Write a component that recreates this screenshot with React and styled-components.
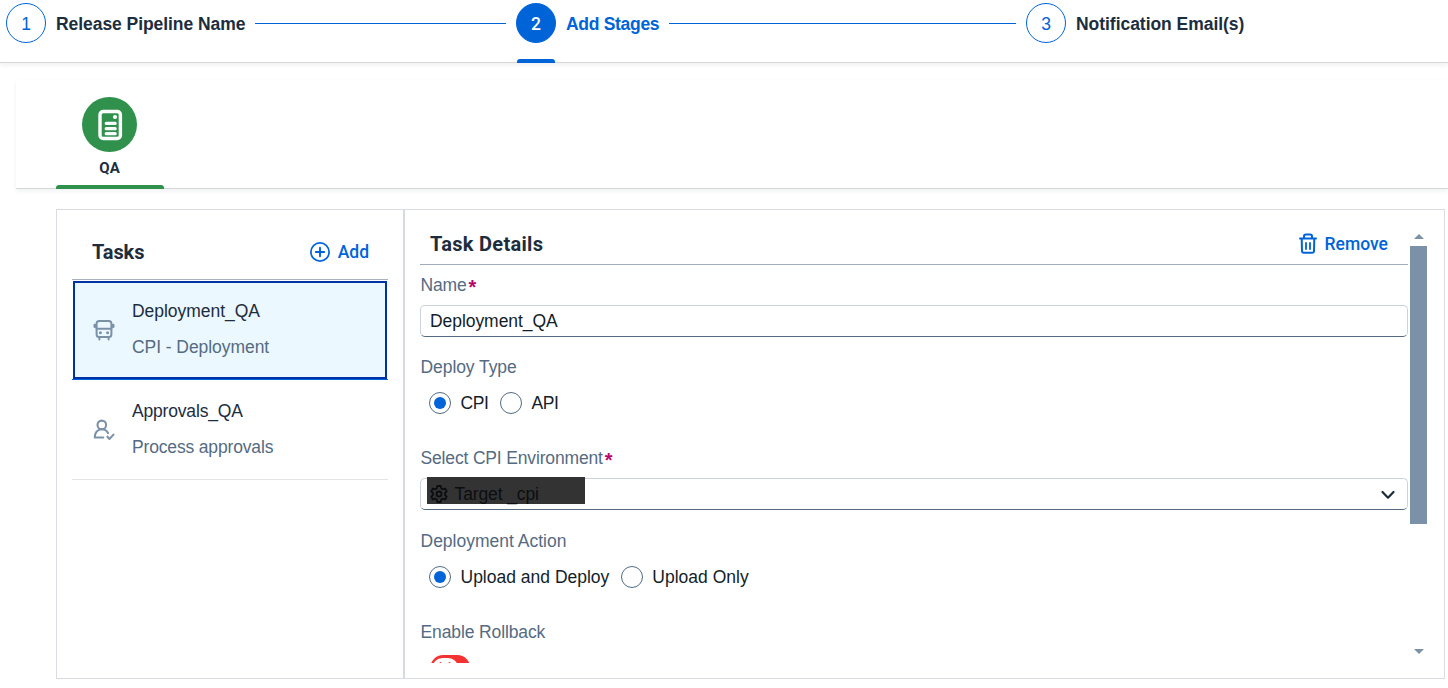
import React from 'react';
import styled, { createGlobalStyle } from 'styled-components';

const blue = '#0064d9';
const ink = '#1d2d3e';
const muted = '#556b82';
const slate = '#7b91a8';

const GlobalStyle = createGlobalStyle`
  * { box-sizing: border-box; }
  body {
    margin: 0;
    background: #fff;
    color: ${ink};
    font: 17.5px/24px "Liberation Sans", Arial, sans-serif;
    overflow: hidden;
  }
`;

const Page = styled.div`
  height: 688px;
  display: flex;
  flex-direction: column;
`;

const Text = styled.span`
  white-space: nowrap;
  letter-spacing: ${(p) => p.$ls || 0}px;
`;

const StrongText = styled(Text)`
  font-family: Roboto, "Liberation Sans", sans-serif;
  font-weight: 700;
`;

/* Wizard steps */
const Steps = styled.header`
  flex: none;
  height: 63px;
  padding-left: 6px;
  display: flex;
  border-bottom: 1px solid #d5d7d9;
  box-shadow: 0 2px 4px rgba(34, 53, 72, 0.08);
`;

const Step = styled.div`
  flex: none;
  width: ${(p) => (p.$last ? 'auto' : '510px')};
  padding: 3px 10px 0 0;
  color: ${(p) => (p.$active ? blue : ink)};
`;

const StepRow = styled.div`
  height: 40px;
  display: flex;
  align-items: center;
  gap: 10px;
`;

const StepCircle = styled.span`
  flex: none;
  width: 40px;
  height: 40px;
  border: 1px solid ${blue};
  border-radius: 50%;
  background: ${(p) => (p.$active ? blue : '#fff')};
  color: ${(p) => (p.$active ? '#fff' : blue)};
  font-size: 17.5px;
  font-family: ${(p) => (p.$active ? 'Roboto' : '"Liberation Sans"')}, sans-serif;
  font-weight: ${(p) => (p.$active ? 500 : 400)};
  line-height: 40px;
  text-align: center;
`;

const StepLabel = styled(Text)`
  padding-top: 1px;
  font-weight: 700;
`;

const StepLine = styled.span`
  flex: 1;
  height: 1px;
  margin-top: 1px;
  background: ${blue};
`;

const StepMarker = styled.div`
  width: 38px;
  height: 4px;
  margin: 16px 0 0 1px;
  border-radius: 3px 3px 0 0;
  background: ${blue};
`;

/* Stage tabs */
const StageTabs = styled.nav`
  flex: none;
  height: 109px;
  margin: 17px 0 0 16px;
  padding: 17px 0 0 40px;
  border-bottom: 1px solid #d5d7d9;
  box-shadow: 0 2px 4px rgba(34, 53, 72, 0.07);
`;

const StageTab = styled.div`
  width: 108px;
  height: 92px;
  display: flex;
  flex-direction: column;
  align-items: center;
  font-size: 15px;
`;

const StageBadge = styled.div`
  width: 55px;
  height: 55px;
  margin-right: 1px;
  display: grid;
  place-items: center;
  border-radius: 50%;
  background: #30914c;
`;

const StageName = styled(StrongText)`
  margin: 4px 1px 0 0;
`;

const StageBar = styled.div`
  width: 100%;
  height: 4px;
  margin-top: auto;
  border-radius: 3px 3px 0 0;
  background: #30914c;
`;

/* Split panel */
const Panel = styled.main`
  flex: none;
  height: 470px;
  margin: 20px 3px 0 56px;
  display: flex;
  border: 1px solid #d9dce1;
`;

const TaskColumn = styled.section`
  width: 348px;
  padding: 0 15px;
  border-right: 2px solid #d6dae0;
`;

const TaskHeader = styled.div`
  height: 70px;
  padding: 15px 19px 0 20px;
  display: flex;
  align-items: center;
  justify-content: space-between;
  border-bottom: 1px solid #a8b3bd;
`;

const Title = styled(StrongText).attrs({ as: 'h2' })`
  margin: 0;
  font-size: 20px;
`;

const LinkButton = styled.button`
  display: flex;
  align-items: center;
  gap: ${(p) => p.$gap}px;
  padding: 0;
  border: 0;
  background: none;
  color: ${blue};
  font: 500 17.5px/24px Roboto, "Liberation Sans", sans-serif;
`;

const TaskItem = styled.div`
  height: 100px;
  padding: ${(p) => (p.$selected ? '1px 1px 0' : '0 1px')};
  border-bottom: 1px solid ${(p) => (p.$selected ? blue : '#e3e5e6')};
`;

const TaskBody = styled.div`
  height: 100%;
  padding-left: 18px;
  display: flex;
  align-items: center;
  border: 2px solid ${(p) => (p.$selected ? '#0032a5' : 'transparent')};
  background: ${(p) => (p.$selected ? '#ebf8ff' : 'transparent')};
  gap: 17px;
`;

const TaskLabels = styled.div`
  display: flex;
  flex-direction: column;
  gap: 12px;
  padding-bottom: ${(p) => (p.$selected ? 2 : 1)}px;
`;

const Secondary = styled(Text)`
  color: ${muted};
`;

const Details = styled.section`
  flex: 1;
  height: 453px;
  padding: 15px 17px 0 15px;
  display: flex;
  gap: 2px;
  overflow: hidden;
`;

const Form = styled.div`
  flex: 1;
`;

const DetailsHeader = styled.div`
  height: 40px;
  padding: 0 20px 2px 10px;
  display: flex;
  align-items: center;
  justify-content: space-between;
  border-bottom: 1px solid #9fadbb;
`;

const Label = styled.div`
  display: flex;
  align-items: center;
  gap: 2px;
  height: 24px;
  margin-top: ${(p) => p.$top}px;
  padding-left: 0.5px;
  color: ${muted};
`;

const Required = styled.span`
  color: #ba066c;
  font: 700 20px/24px "Liberation Sans", sans-serif;
  padding-top: 4px;
`;

const Field = styled.div`
  height: 32px;
  margin-top: ${(p) => p.$top}px;
  padding: 0 12px 0 9px;
  display: flex;
  align-items: center;
  border: 1px solid #ccd3dc;
  border-bottom-color: ${muted};
  border-radius: 5px;
  color: #131e29;
`;

const SelectField = styled(Field)`
  padding-left: 5.5px;
  justify-content: space-between;
`;

const Redacted = styled.div`
  width: 158px;
  height: 27px;
  margin-top: -8px;
  padding: 7px 0 0 3px;
  display: flex;
  align-items: center;
  gap: 7px;
  background: #333;
  color: #0b0e11;
`;

const RadioRow = styled.div`
  height: 24px;
  margin-top: 12px;
  padding-left: 9px;
  display: flex;
  align-items: center;
  gap: 11.5px;
  color: #131e29;
`;

const Radio = styled.label`
  display: flex;
  align-items: center;
  gap: 9.5px;
`;

const RadioDot = styled.span`
  flex: none;
  width: 22px;
  height: 22px;
  display: grid;
  place-items: center;
  border: 1px solid ${muted};
  border-radius: 50%;

  &::after {
    content: '';
    width: 12px;
    height: 12px;
    border-radius: 50%;
    background: ${(p) => (p.$on ? blue : 'transparent')};
  }
`;

const SwitchSlot = styled.div`
  height: 8px;
  margin: 11px 0 0 9.5px;
  overflow: hidden;
`;

const Scrollbar = styled.div`
  flex: none;
  width: 17px;
  height: 428px;
  padding-top: 9px;
  display: flex;
  flex-direction: column;
  align-items: center;
`;

const Arrow = styled.span`
  flex: none;
  width: 0;
  height: 0;
  border: 5px solid transparent;
  border-${(p) => (p.$up ? 'top' : 'bottom')}-width: 0;
  border-${(p) => (p.$up ? 'bottom' : 'top')}-color: ${slate};
`;

const Thumb = styled.div`
  flex: none;
  width: 17px;
  height: 278px;
  margin: 7px 0 125px;
  background: ${slate};
`;

const DocumentIcon = () => (
  <svg width="26" height="32" viewBox="0 0 26 32" fill="none" stroke="#fff" strokeLinecap="round">
    <rect x="3" y="2.5" width="20.4" height="27" rx="3.2" strokeWidth="3.4" />
    <circle cx="18" cy="8" r="2.1" fill="#fff" stroke="none" />
    <path d="M9.2 14.3h9M9.2 19.700h9M9.2 24.700h9" strokeWidth="3.2" />
  </svg>
);

const AddIcon = () => (
  <svg width="20" height="20" viewBox="0 0 20 20" fill="none" stroke={blue} strokeLinecap="round">
    <circle cx="10" cy="10" r="9.1" strokeWidth="1.7" />
    <path d="M10 5.8v8.4M5.8 10h8.4" strokeWidth="1.9" />
  </svg>
);

const BusIcon = () => (
  <svg width="22" height="22" viewBox="0 0 22 22" fill="none" stroke={slate} strokeWidth="2" strokeLinecap="round">
    <rect x="3.6" y="1.9" width="14.8" height="16.2" rx="2.6" />
    <path d="M3.6 9.8h14.800M6.400 18.500v1.900M15.600 18.500v1.900" />
    <path d="M1.900 6.100v1.600M20.100 6.100v1.600" strokeWidth="2.800" />
    <circle cx="7.400" cy="13.700" r="1.500" fill={slate} stroke="none" />
    <circle cx="14.600" cy="13.700" r="1.500" fill={slate} stroke="none" />
  </svg>
);

const ApproverIcon = () => (
  <svg width="22" height="22" viewBox="0 0 22 22" fill="none" stroke={slate} strokeWidth="2.1" strokeLinecap="round" strokeLinejoin="round">
    <circle cx="8.8" cy="5.9" r="4.3" />
    <path d="M10.3 18.5H1.8c0-4.4 2.4-8.300 7-8.300 3 0 5.100 1.500 6.200 3.900" />
    <path d="M14.400 17.700l2.100 2.200 4-4.300" />
  </svg>
);

const TrashIcon = () => (
  <svg width="18" height="21" viewBox="0 0 18 21" fill="none" stroke={blue} strokeWidth="2" strokeLinecap="round" strokeLinejoin="round">
    <path d="M1 5.500h16M5 5.300V3.300q0-1.800 1.800-1.800h4.400Q13 1.500 13 3.300v2M2.700 5.500l.3 12.500Q3.100 19.800 4.800 19.800h8.400q1.700 0 1.800-1.800L15.300 5.500" />
    <path d="M7 10v6M11 10v6" strokeWidth="1.800" />
  </svg>
);

const GearIcon = () => (
  <svg width="18" height="18" viewBox="0 0 18 18" fill="none" stroke="currentColor" strokeWidth="1.8" strokeLinejoin="round">
    <path d="M7.300 1h3.400l.5 2.400 1.600.900 2.300-.8 1.700 2.900-1.800 1.600v2l1.800 1.600-1.700 2.900-2.300-.8-1.600.900-.5 2.400H7.300l-.5-2.400-1.600-.900-2.300.8-1.700-2.900L3 10V8L1.200 6.400l1.700-2.900 2.300.8 1.600-.900z" />
    <circle cx="9" cy="9" r="2.500" />
  </svg>
);

const ChevronIcon = () => (
  <svg width="14" height="9" viewBox="0 0 14 9" fill="none" stroke={ink} strokeWidth="2.200" strokeLinecap="round" strokeLinejoin="round">
    <path d="M1.500 2L7 7.700l5.500-5.700" />
  </svg>
);

const SwitchIcon = () => (
  <svg width="41" height="24" viewBox="0 0 41 24">
    <rect x="0.500" y="0" width="39.500" height="25" rx="12.500" fill="#f53232" />
    <rect x="2.800" y="3" width="25" height="19" rx="9.500" fill="#fff" />
    <path d="M10.500 8l8 8M19.500 8l-8 8" stroke="#f53232" strokeWidth="1.800" strokeLinecap="round" />
  </svg>
);

function WizardStep({ number, label, ls, active, last }) {
  return (
    <Step $active={active} $last={last}>
      <StepRow>
        <StepCircle $active={active}>{number}</StepCircle>
        <StepLabel $ls={ls}>{label}</StepLabel>
        {!last && <StepLine />}
      </StepRow>
      {active && <StepMarker />}
    </Step>
  );
}

function Task({ icon, name, nameLs, type, typeLs, selected }) {
  return (
    <TaskItem $selected={selected}>
      <TaskBody $selected={selected}>
        {icon}
        <TaskLabels $selected={selected}>
          <Text $ls={nameLs}>{name}</Text>
          <Secondary $ls={typeLs}>{type}</Secondary>
        </TaskLabels>
      </TaskBody>
    </TaskItem>
  );
}

function RadioOption({ label, ls, on }) {
  return (
    <Radio>
      <RadioDot $on={on} />
      <Text $ls={ls}>{label}</Text>
    </Radio>
  );
}

export default function App() {
  return (
    <Page>
      <GlobalStyle />
      <Steps>
        <WizardStep number="1" label="Release Pipeline Name" ls={-0.06} />
        <WizardStep number="2" label="Add Stages" ls={-0.3} active />
        <WizardStep number="3" label="Notification Email(s)" ls={-0.04} last />
      </Steps>
      <StageTabs>
        <StageTab>
          <StageBadge><DocumentIcon /></StageBadge>
          <StageName $ls={0.16}>QA</StageName>
          <StageBar />
        </StageTab>
      </StageTabs>
      <Panel>
        <TaskColumn>
          <TaskHeader>
            <Title $ls={-0.1}>Tasks</Title>
            <LinkButton $gap={7.5}><AddIcon /><Text>Add</Text></LinkButton>
          </TaskHeader>
          <Task icon={<BusIcon />} name="Deployment_QA" nameLs={-0.04} type="CPI - Deployment" typeLs={-0.06} selected />
          <Task icon={<ApproverIcon />} name="Approvals_QA" nameLs={-0.18} type="Process approvals" typeLs={-0.16} />
        </TaskColumn>
        <Details>
          <Form>
            <DetailsHeader>
              <Title $ls={0.3}>Task Details</Title>
              <LinkButton $gap={8}><TrashIcon /><Text>Remove</Text></LinkButton>
            </DetailsHeader>
            <Label $top={8}><Text $ls={-0.15}>Name</Text><Required>*</Required></Label>
            <Field $top={8}><Text $ls={-0.06}>Deployment_QA</Text></Field>
            <Label $top={18}><Text $ls={-0.07}>Deploy Type</Text></Label>
            <RadioRow>
              <RadioOption label="CPI" ls={-0.41} on />
              <RadioOption label="API" ls={-0.42} />
            </RadioRow>
            <Label $top={31}><Text $ls={-0.16}>Select CPI Environment</Text><Required>*</Required></Label>
            <SelectField $top={8}>
              <Redacted><GearIcon /><Text $ls={-0.12}>Target _cpi</Text></Redacted>
              <ChevronIcon />
            </SelectField>
            <Label $top={19}><Text>Deployment Action</Text></Label>
            <RadioRow>
              <RadioOption label="Upload and Deploy" ls={0} on />
              <RadioOption label="Upload Only" ls={0} />
            </RadioRow>
            <Label $top={31}><Text $ls={-0.12}>Enable Rollback</Text></Label>
            <SwitchSlot><SwitchIcon /></SwitchSlot>
          </Form>
          <Scrollbar>
            <Arrow $up />
            <Thumb />
            <Arrow />
          </Scrollbar>
        </Details>
      </Panel>
    </Page>
  );
}
